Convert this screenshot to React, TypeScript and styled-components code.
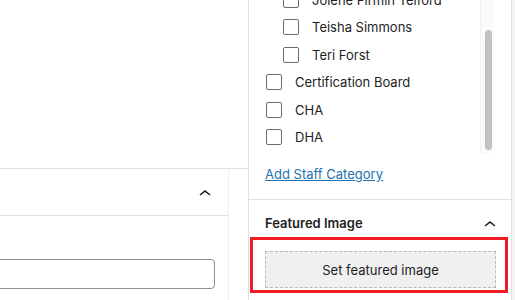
import styled, { createGlobalStyle } from "styled-components";

const GlobalStyle = createGlobalStyle`
    html, body {
        margin: 0;
        padding: 0;
        background: #fff;
        overflow: hidden;
    }

    body {
        font-family: Inter, "Noto Sans", Roboto, sans-serif;
        font-size: 13px;
        color: #1e1e1e;
    }
`;

const ChevronUp = () => (
    <ChevronIcon width="24" height="24" viewBox="0 0 24 24" aria-hidden="true">
        <path d="M6.5 12.4L12 8l5.5 4.4-.9 1.2L12 10l-4.6 3.6-.9-1.2z" fill="#1e1e1e"/>
    </ChevronIcon>
);

type Term = { name: string; child?: boolean };

const terms: Term[] = [
    {name: "Jolene Firmin Telford", child: true},
    {name: "Teisha Simmons", child: true},
    {name: "Teri Forst", child: true},
    {name: "Certification Board"},
    {name: "CHA"},
    {name: "DHA"},
];

export default function App() {
    return (
        <>
            <GlobalStyle/>
            <Screen>
                <Main>
                    <Canvas/>
                    <MetaBox>
                        <MetaHeader>
                            <ChevronUp/>
                        </MetaHeader>
                        <MetaBody>
                            <TextInput type="text"/>
                        </MetaBody>
                    </MetaBox>
                </Main>

                <Sidebar>
                    <TermsPanel>
                        <TermsScroll>
                            <TermList>
                                {terms.map((term) => (
                                    <TermItem key={term.name} $child={term.child}>
                                        <Checkbox/>
                                        <span>{term.name}</span>
                                    </TermItem>
                                ))}
                            </TermList>
                            <ScrollTrack>
                                <ScrollThumb/>
                            </ScrollTrack>
                        </TermsScroll>
                        <AddLink href="#">Add Staff Category</AddLink>
                    </TermsPanel>

                    <PanelHeader>
                        <h2>Featured Image</h2>
                        <ChevronUp/>
                    </PanelHeader>
                    <Highlight>
                        <SetImageButton>Set featured image</SetImageButton>
                    </Highlight>
                </Sidebar>

                <OuterScroll/>
            </Screen>
        </>
    );
}

const ChevronIcon = styled.svg`
    display: block;
    margin-top: 4px;
    flex-shrink: 0;
`;

const Screen = styled.div`
    display: flex;
    height: 300px;
    overflow: hidden;
`;

const Main = styled.div`
    width: 248px;
    flex-shrink: 0;
    border-right: 1px solid #e0e0e0;
    display: flex;
    flex-direction: column;
`;

const Canvas = styled.div`
    height: 168px;
    border-bottom: 1px solid #e0e0e0;
`;

const MetaBox = styled.div`
    width: 228px;
    flex: 1;
    border-right: 1px solid #f0f0f0;
    overflow: hidden;
`;

const MetaHeader = styled.div`
    height: 46px;
    border-bottom: 1px solid #e0e0e0;
    display: flex;
    align-items: center;
    justify-content: flex-end;
    padding-right: 11px;
`;

const MetaBody = styled.div`
    padding: 43px 13px 0 0;
`;

const TextInput = styled.input`
    display: block;
    box-sizing: border-box;
    width: calc(100% + 40px);
    margin-left: -40px;
    height: 30px;
    border: 1px solid #8c8f94;
    border-radius: 4px;
    background: #fff;
`;

const Sidebar = styled.div`
    width: 262px;
    flex-shrink: 0;
    border-right: 1px solid #e0e0e0;
    display: flex;
    flex-direction: column;
`;

const TermsPanel = styled.div`
    padding: 0 16px 15px;
    border-bottom: 1px solid #e0e0e0;
`;

const TermsScroll = styled.div`
    height: 153px;
    display: flex;
    overflow: hidden;
`;

const TermList = styled.ul`
    flex: 1;
    list-style: none;
    margin: -14px 0 0;
    padding: 0 0 0 1px;
`;

const TermItem = styled.li<{ $child?: boolean }>`
    height: 27.5px;
    display: flex;
    align-items: center;
    gap: 13px;
    padding-left: ${({$child}) => ($child ? "17px" : "0")};
    line-height: 20px;
`;

const Checkbox = styled.span`
    box-sizing: border-box;
    width: 16px;
    height: 16px;
    border: 1.5px solid #6b6b6b;
    border-radius: 2px;
    flex-shrink: 0;
`;

const ScrollTrack = styled.div`
    width: 15px;
    flex-shrink: 0;
    background: #fafafa;
    border-left: 1px solid #f0f0f0;
    box-sizing: border-box;
    padding: 30px 3px 0 4px;
`;

const ScrollThumb = styled.div`
    height: 120px;
    border-radius: 4px;
    background: #c1c1c1;
`;

const AddLink = styled.a`
    display: block;
    margin-top: 11px;
    line-height: 20px;
    color: #2271b1;
    text-decoration: underline;
`;

const PanelHeader = styled.div`
    display: flex;
    align-items: center;
    justify-content: space-between;
    height: 24px;
    padding: 11px 9px 2px 16px;

    h2 {
        margin: 0;
        font-size: 13px;
        font-weight: 600;
    }
`;

const Highlight = styled.div`
    margin: 0 3px 0 1px;
    border: 3px solid #ee1d23;
    padding: 11px 9px 2px 12px;
`;

const SetImageButton = styled.div`
    height: 37px;
    box-sizing: border-box;
    display: flex;
    align-items: center;
    justify-content: center;
    background: #f0f0f0;
    border: 1px dashed #b8b8b8;
`;

const OuterScroll = styled.div`
    flex: 1;
    background: #f5f5f5;
`;
